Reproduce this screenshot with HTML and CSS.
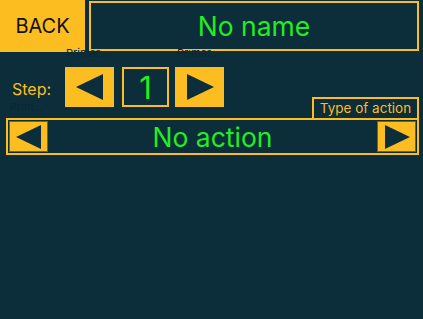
FILE: index.html
```html
<!DOCTYPE html>
<html lang="en">
<head>
    <meta charset="UTF-8">
    <title>Step editor</title>
    <link rel="stylesheet" href="styles.css">
</head>
<body>
    <div class="screen">
        <div class="header">
            <button class="back-btn">BACK</button>
            <div class="name-box">No name</div>
        </div>
        <span class="ghost ghost-1">Primar...</span>
        <span class="ghost ghost-2">Primar...</span>
        <span class="ghost ghost-3">Prim...</span>

        <div class="step-row">
            <span class="step-label">Step:</span>
            <button class="arrow-btn">
                <svg width="28" height="26" viewBox="0 0 28 26"><polygon points="27,0 27,26 0,13" fill="#0c2d3a"/></svg>
            </button>
            <div class="step-num">1</div>
            <button class="arrow-btn">
                <svg width="28" height="26" viewBox="0 0 28 26"><polygon points="1,0 1,26 28,13" fill="#0c2d3a"/></svg>
            </button>
        </div>

        <div class="type-row">
            <div class="type-label">Type of action</div>
        </div>
        <div class="action-bar">
            <button class="small-arrow">
                <svg width="28" height="26" viewBox="0 0 28 26"><polygon points="27,0 27,26 0,13" fill="#0c2d3a"/></svg>
            </button>
            <div class="action-name">No action</div>
            <button class="small-arrow">
                <svg width="28" height="26" viewBox="0 0 28 26"><polygon points="1,0 1,26 28,13" fill="#0c2d3a"/></svg>
            </button>
        </div>
    </div>
</body>
</html>
```

FILE: styles.css
```css
body {
    margin: 0;
    background: #0c2d3a;
    font-family: Inter, "Noto Sans", sans-serif;
}
.screen {
    position: relative;
    width: 423px;
    height: 319px;
}
button {
    border: none;
    padding: 0;
    font-family: inherit;
    cursor: pointer;
}
.header {
    display: flex;
    height: 52px;
}
.back-btn {
    width: 85px;
    height: 52px;
    background: #fcbd21;
    color: #111;
    font-size: 20px;
}
.name-box {
    flex: 1;
    margin: 1px 4px 1px 4px;
    border: 2px solid #fcbd21;
    color: #22ee22;
    font-size: 26.5px;
    display: flex;
    align-items: center;
    justify-content: center;
}
.ghost {
    position: absolute;
    font-size: 11px;
    color: #0a2833;
}
.ghost-1 { left: 66px; top: 46px; }
.ghost-2 { left: 177px; top: 46px; }
.ghost-3 { left: 10px; top: 100px; }
.step-row {
    display: flex;
    align-items: center;
    margin-top: 15px;
    height: 40px;
}
.step-label {
    width: 53px;
    padding-left: 12px;
    color: #fcbd21;
    font-size: 16px;
    padding-top: 4px;
}
.arrow-btn {
    width: 49px;
    height: 40px;
    background: #fcbd21;
    display: flex;
    align-items: center;
    justify-content: center;
}
.step-num {
    box-sizing: border-box;
    width: 47px;
    height: 40px;
    margin: 0 6px 0 8px;
    border: 2px solid #fcbd21;
    color: #22ee22;
    font-size: 31px;
    display: flex;
    align-items: center;
    justify-content: center;
}
.type-row {
    display: flex;
    justify-content: flex-end;
    margin-top: -10px;
    padding-right: 4px;
}
.type-label {
    border: 2px solid #fcbd21;
    border-bottom: none;
    color: #fcbd21;
    font-size: 13.5px;
    padding: 1px 5px 1px 5px;
    height: 17px;
    width: 93px;
    text-align: center;
}
.action-bar {
    display: flex;
    align-items: center;
    margin: 0 4px 0 6px;
    height: 31px;
    padding: 1px;
    border: 2px solid #fcbd21;
}
.small-arrow {
    width: 39px;
    height: 31px;
    background: #fcbd21;
    box-shadow: inset 0 0 0 1px #6d6430;
    display: flex;
    align-items: center;
    justify-content: center;
}
.small-arrow svg {
    width: 26px;
    height: 24px;
}
.action-name {
    flex: 1;
    text-align: center;
    color: #22ee22;
    font-size: 26.5px;
}
```
